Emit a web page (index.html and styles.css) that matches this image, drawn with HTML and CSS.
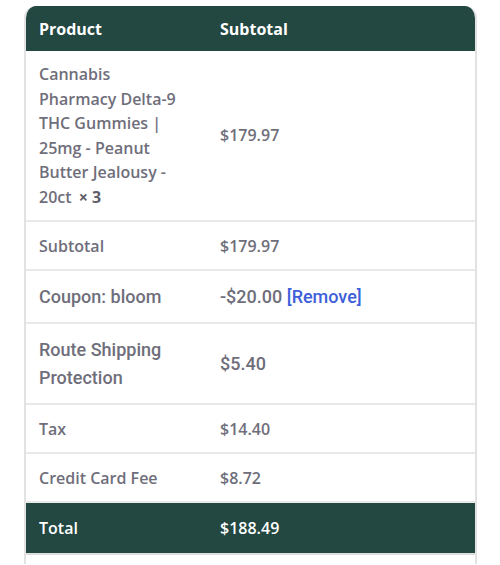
FILE: index.html
```html
<!DOCTYPE html>
<html>
<head>
<meta charset="utf-8">
<link rel="stylesheet" href="styles.css">
</head>
<body>
<div class="card">
  <table class="order">
    <colgroup><col class="col1"><col class="col2"></colgroup>
    <thead>
      <tr class="head"><th class="c1">Product</th><th class="c2">Subtotal</th></tr>
    </thead>
    <tbody>
      <tr class="product">
        <td class="c1">Cannabis Pharmacy Delta-9 THC Gummies | 25mg - Peanut Butter Jealousy - 20ct <strong class="qty">×&nbsp;3</strong></td>
        <td class="c2">$179.97</td>
      </tr>
      <tr class="row"><td class="c1">Subtotal</td><td class="c2">$179.97</td></tr>
      <tr class="row big coupon"><td class="c1">Coupon: bloom</td><td class="c2">-$20.00 <a class="remove" href="#">[Remove]</a></td></tr>
      <tr class="big route"><td class="c1">Route Shipping Protection</td><td class="c2">$5.40</td></tr>
      <tr class="row"><td class="c1">Tax</td><td class="c2">$14.40</td></tr>
      <tr class="row"><td class="c1">Credit Card Fee</td><td class="c2">$8.72</td></tr>
      <tr class="total"><td class="c1">Total</td><td class="c2">$188.49</td></tr>
    </tbody>
  </table>
  <div class="tail"></div>
</div>
</body>
</html>
```
FILE: styles.css
```css
html, body {
  margin: 0;
  padding: 0;
  background: #ffffff;
}
body {
  padding: 6px 23px 0 24px;
  font-family: "Open Sans", "Liberation Sans", sans-serif;
  color: #6f6e7b;
}
.card {
  border-left: 2px solid #e2e2e2;
  border-right: 2px solid #e2e2e2;
  border-radius: 12px 12px 0 0;
  overflow: hidden;
}
.order {
  width: 100%;
  border-collapse: collapse;
  table-layout: fixed;
}
.col1 { width: 181px; }
.order th, .order td {
  text-align: left;
  vertical-align: middle;
  padding: 0 0 0 13px;
}
.order .c1 { padding-right: 20px; }
.head {
  background: #234741;
  color: #ffffff;
  height: 45px;
}
.head th {
  font-size: 16px;
  font-weight: 700;
}
.order tbody td {
  border-bottom: 2px solid #e8e8e8;
  font-size: 16px;
  font-weight: 600;
}
.order .product td { padding-top: 11px; padding-bottom: 11px; line-height: 24.5px; }
.row { height: 49px; }
.order tbody .big td {
  font-family: Roboto, "Liberation Sans", sans-serif;
  font-size: 18px;
  font-weight: 500;
}
.coupon { height: 53px; }
.order .route td { line-height: 28px; padding-top: 12px; padding-bottom: 11px; }
.remove { color: #3d5fd9; text-decoration: none; }
.qty { font-weight: 700; margin-left: 3px; color: #5f5e6a; }
.order tbody .total td {
  background: #234741;
  color: #ffffff;
  height: 50px;
  border-bottom: 2px solid #dedede;
  font-weight: 600;
}
.tail { height: 9px; }
```
